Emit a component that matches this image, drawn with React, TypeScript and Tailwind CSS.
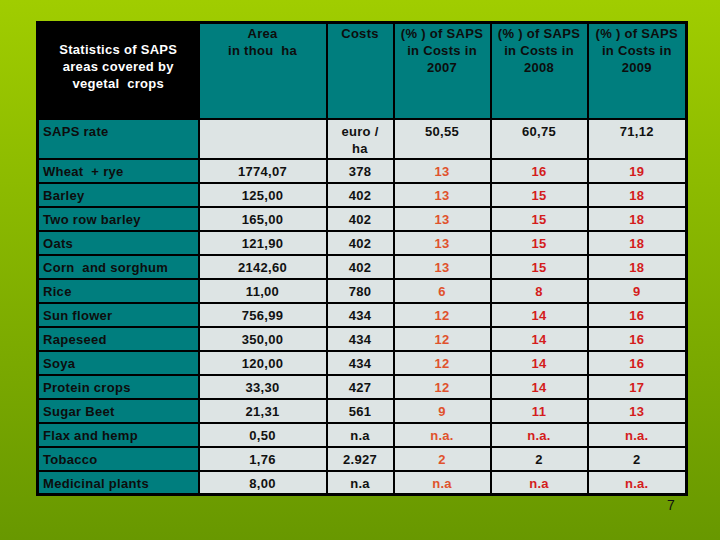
const ROWS = [
  { name: "Wheat  + rye", area: "1774,07", cost: "378", y7: "13", y8: "16", y9: "19" },
  { name: "Barley", area: "125,00", cost: "402", y7: "13", y8: "15", y9: "18" },
  { name: "Two row barley", area: "165,00", cost: "402", y7: "13", y8: "15", y9: "18" },
  { name: "Oats", area: "121,90", cost: "402", y7: "13", y8: "15", y9: "18" },
  { name: "Corn  and sorghum", area: "2142,60", cost: "402", y7: "13", y8: "15", y9: "18" },
  { name: "Rice", area: "11,00", cost: "780", y7: "6", y8: "8", y9: "9" },
  { name: "Sun flower", area: "756,99", cost: "434", y7: "12", y8: "14", y9: "16" },
  { name: "Rapeseed", area: "350,00", cost: "434", y7: "12", y8: "14", y9: "16" },
  { name: "Soya", area: "120,00", cost: "434", y7: "12", y8: "14", y9: "16" },
  { name: "Protein crops", area: "33,30", cost: "427", y7: "12", y8: "14", y9: "17" },
  { name: "Sugar Beet", area: "21,31", cost: "561", y7: "9", y8: "11", y9: "13" },
  { name: "Flax and hemp", area: "0,50", cost: "n.a", y7: "n.a.", y8: "n.a.", y9: "n.a." },
  { name: "Tobacco", area: "1,76", cost: "2.927", y7: "2", y8: "2", y9: "2", plain: true },
  { name: "Medicinal plants", area: "8,00", cost: "n.a", y7: "n.a", y8: "n.a", y9: "n.a." },
];

const cell = "border-2 border-black px-[6px]";
const teal = "bg-[#007e7e] text-[#0d0d0d]";
const light = "bg-[#dde4e4] text-center text-[#111]";

export default function App() {
  return (
    <div
      className="w-[720px] h-[540px] bg-gradient-to-b from-[#a0cd00] to-[#689800] pt-[21px] pl-[36px] text-[13px] font-bold leading-[17px] tracking-[0.3px]"
      style={{ fontFamily: '"Liberation Sans", Arial, sans-serif' }}
    >
      <table className="border-collapse border-[3px] border-black table-fixed w-[649px]">
        <colgroup>
          <col className="w-[161px]" />
          <col className="w-[128px]" />
          <col className="w-[67px]" />
          <col className="w-[97px]" />
          <col className="w-[97px]" />
          <col className="w-[99px]" />
        </colgroup>
        <thead>
          <tr className="h-[96px]">
            <th className={`${cell} bg-black text-white text-center align-middle font-bold pb-[9px]`}>
              Statistics of SAPS
              <br />
              areas covered by
              <br />
              vegetal&nbsp; crops
            </th>
            <th className={`${cell} ${teal} text-center align-top font-bold pt-[1px]`}>
              Area
              <br />
              in thou&nbsp; ha
            </th>
            <th className={`${cell} ${teal} text-center align-top font-bold pt-[1px]`}>Costs</th>
            {["2007", "2008", "2009"].map((y) => (
              <th key={y} className={`${cell} ${teal} text-center align-top font-bold pt-[1px]`}>
                (% ) of SAPS
                <br />
                in Costs in
                <br />
                {y}
              </th>
            ))}
          </tr>
        </thead>
        <tbody>
          <tr className="h-[40px]">
            <td className={`${cell} ${teal} align-top pl-[4px] pt-[3px]`}>SAPS rate</td>
            <td className={`${cell} ${light}`}></td>
            <td className={`${cell} ${light} align-top pt-[3px]`}>
              euro /
              <br />
              ha
            </td>
            <td className={`${cell} ${light} align-top pt-[3px]`}>50,55</td>
            <td className={`${cell} ${light} align-top pt-[3px]`}>60,75</td>
            <td className={`${cell} ${light} align-top pt-[3px]`}>71,12</td>
          </tr>
          {ROWS.map((r) => (
            <tr key={r.name} className="h-[24px]">
              <td className={`${cell} ${teal} align-middle pl-[4px] pt-[2px] whitespace-pre`}>{r.name}</td>
              <td className={`${cell} ${light} align-middle pt-[2px]`}>{r.area}</td>
              <td className={`${cell} ${light} align-middle pt-[2px]`}>{r.cost}</td>
              <td className={`${cell} ${light} align-middle pt-[2px] !text-[#e0522c]`}>{r.y7}</td>
              <td className={`${cell} ${light} align-middle pt-[2px] ${r.plain ? "" : "!text-[#d41c1c]"}`}>{r.y8}</td>
              <td className={`${cell} ${light} align-middle pt-[2px] ${r.plain ? "" : "!text-[#d41c1c]"}`}>{r.y9}</td>
            </tr>
          ))}
        </tbody>
      </table>
      <div className="flex justify-end w-[649px] pr-[10px] pt-[1px] font-normal text-[14px] text-[#111]">7</div>
    </div>
  );
}
